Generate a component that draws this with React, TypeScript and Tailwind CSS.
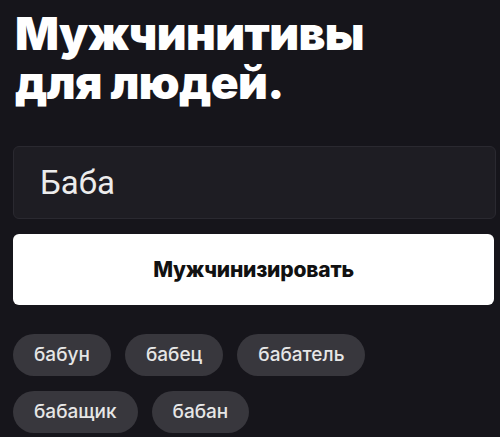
export default function App() {
  const suggestions = ["бабун", "бабец", "бабатель", "бабащик", "бабан"];

  return (
    <div className="h-[437px] w-[500px] overflow-hidden bg-[#16151b] pl-[13px] pr-[5px] pt-[9px] font-['Inter',sans-serif]">
      <h1 className="pl-[2px] text-[46px] font-black leading-[49px] tracking-[-0.6px] text-white">
        Мужчинитивы
        <br />
        для людей.
      </h1>

      <div className="mt-[39px] flex h-[73px] w-[483px] items-center rounded-[6px] border border-[#2a2930] bg-[#1e1d23] pl-[26px]">
        <span className="font-['Roboto',sans-serif] text-[33px] text-[#ececec]">Баба</span>
      </div>

      <button className="mt-[15px] flex h-[71px] w-[481px] items-center justify-center rounded-[6px] bg-white text-[21px] font-extrabold tracking-[-0.2px] text-[#111]">
        Мужчинизировать
      </button>

      <div className="mt-[29px] flex w-[380px] flex-wrap gap-x-[14px] gap-y-[15px]">
        {suggestions.map((s) => (
          <div
            key={s}
            className="flex h-[42px] items-center rounded-full bg-[#38373d] px-[21px] text-[19px] font-medium text-[#e6e6e6]"
          >
            {s}
          </div>
        ))}
      </div>
    </div>
  );
}
